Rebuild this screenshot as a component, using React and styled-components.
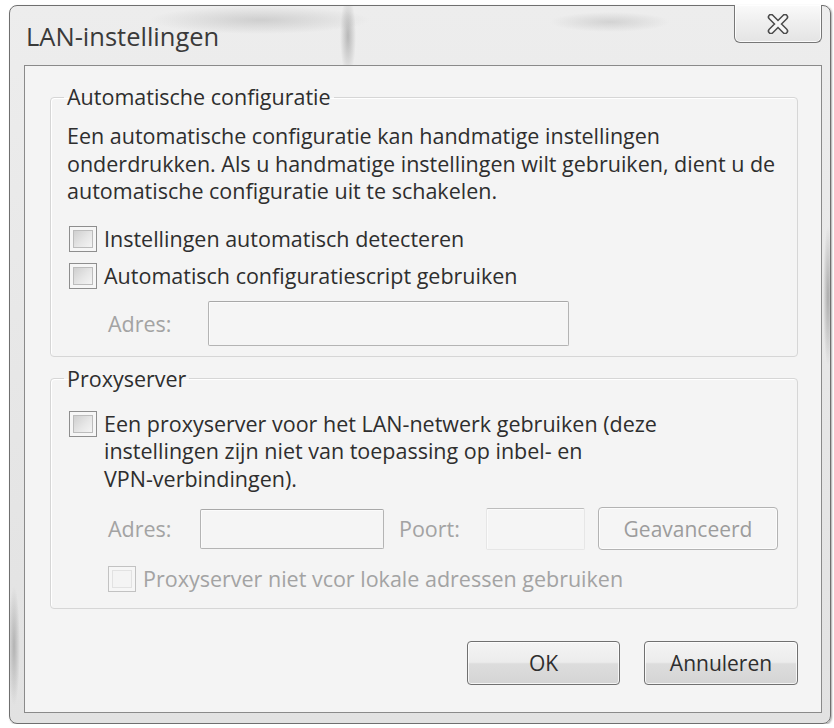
import React from 'react';
import styled, { createGlobalStyle } from 'styled-components';

const GlobalStyle = createGlobalStyle`
  html, body {
    margin: 0;
    background: #ffffff;
  }
  body {
    font-family: "Open Sans", "Noto Sans", sans-serif;
    color: #2e2e2e;
  }
`;

const Window = styled.div`
  box-sizing: border-box;
  width: 822px;
  margin: 5px 0 0 9px;
  padding: 0 8px 10px 14px;
  border: 1px solid #6f6f6f;
  border-radius: 8px;
  background:
    radial-gradient(ellipse 110px 14px at 250px 14px, rgba(150, 150, 150, 0.35), transparent),
    radial-gradient(ellipse 60px 10px at 600px 16px, rgba(150, 150, 150, 0.3), transparent),
    radial-gradient(ellipse 8px 40px at 338px 30px, rgba(120, 120, 120, 0.45), transparent),
    radial-gradient(ellipse 6px 60px at 4px 640px, rgba(120, 120, 120, 0.45), transparent),
    radial-gradient(ellipse 5px 70px at 818px 290px, rgba(110, 110, 110, 0.5), transparent),
    linear-gradient(180deg, #ededed 0%, #e6e6e6 60%, #e2e2e2 100%);
  box-shadow: 1px 1px 2px rgba(0, 0, 0, 0.35);
`;

const TitleBar = styled.div`
  display: flex;
  justify-content: space-between;
  align-items: flex-start;
  height: 59px;
`;

const Title = styled.div`
  padding: 15px 0 0 2px;
  font-size: 25.5px;
  line-height: 30px;
  color: #3a3a3a;
`;

const CloseButton = styled.div`
  box-sizing: border-box;
  width: 88px;
  height: 38px;
  margin-top: -1px;
  display: flex;
  align-items: center;
  justify-content: center;
  border: 1px solid #777;
  border-top: none;
  border-radius: 0 0 6px 6px;
  background: linear-gradient(180deg, #fafafa 0%, #eeeeee 50%, #e4e4e4 100%);
  box-shadow: inset 0 0 0 1px rgba(255, 255, 255, 0.8);
`;

const Client = styled.div`
  display: flex;
  flex-direction: column;
  padding: 20px 23px 27px 25px;
  border: 1px solid #8a8a8a;
  background: #f4f4f4;
`;

const Group = styled.fieldset`
  margin: ${(p) => (p.$first ? '0' : '11px 0 0')};
  min-width: 0;
  padding: ${(p) => p.$top}px 16px ${(p) => p.$bottom}px 16px;
  border: 1px solid #d6d6d6;
  border-radius: 4px;
  box-shadow: inset 1px 1px 0 #ffffff;
`;

const Legend = styled.legend`
  margin-left: -3px;
  padding: 0 3px;
  font-size: 21.5px;
  line-height: 22px;
  color: #2e2e2e;
`;

const Text = styled.div`
  font-size: 21.5px;
  line-height: 27.5px;
`;

const CheckRow = styled.div`
  display: flex;
  align-items: ${(p) => (p.$multi ? 'flex-start' : 'center')};
  gap: 7px;
  margin: ${(p) => p.$margin || '0'};
  padding-left: ${(p) => p.$indent || 2}px;
  min-height: 30px;
`;

const Box = styled.span`
  box-sizing: border-box;
  flex: none;
  width: 28px;
  height: 26px;
  margin-top: ${(p) => (p.$multi ? '1px' : '0')};
  border: 1px solid ${(p) => (p.$disabled ? '#c2c2c2' : '#8e8e8e')};
  padding: 3px;
  background: #f6f6f6;

  &::after {
    content: '';
    display: block;
    width: 100%;
    height: 100%;
    border: 1px solid ${(p) => (p.$disabled ? '#e2e2e2' : '#bcbcbc')};
    box-sizing: border-box;
    background: ${(p) =>
      p.$disabled
        ? '#f4f4f4'
        : 'linear-gradient(135deg, #cfcfcf 0%, #e6e6e6 55%, #f4f4f4 100%)'};
  }
`;

const Label = styled.span`
  font-size: 21.5px;
  line-height: 27.5px;
  color: ${(p) => (p.$disabled ? '#a3a3a3' : '#2e2e2e')};
`;

const FieldRow = styled.div`
  display: flex;
  align-items: center;
  margin: ${(p) => p.$margin || '0'};
  padding-left: 41px;
`;

const FieldLabel = styled.span`
  width: ${(p) => p.$width}px;
  flex: none;
  font-size: 21.5px;
  color: #a3a3a3;
`;

const Input = styled.div`
  box-sizing: border-box;
  flex: none;
  width: ${(p) => p.$width}px;
  height: ${(p) => p.$height}px;
  margin-right: ${(p) => p.$gap || 0}px;
  border: 1px solid ${(p) => (p.$faint ? '#e6e6e6' : '#b4b4b4')};
  border-top-color: ${(p) => (p.$faint ? '#bdbdbd' : '#a8a8a8')};
  border-radius: 2px;
  background: #f5f5f5;
  box-shadow: inset 1px 1px 0 #fbfbfb;
`;

const Button = styled.div`
  box-sizing: border-box;
  display: flex;
  align-items: center;
  justify-content: center;
  width: ${(p) => p.$width}px;
  height: ${(p) => p.$height}px;
  border: 1px solid ${(p) => (p.$disabled ? '#b3b3b3' : '#707070')};
  border-radius: 4px;
  font-size: 21px;
  color: ${(p) => (p.$disabled ? '#9c9c9c' : '#2e2e2e')};
  background: ${(p) =>
    p.$disabled
      ? '#f5f5f5'
      : 'linear-gradient(180deg, #f4f4f4 0%, #ececec 48%, #dddddd 52%, #d4d4d4 100%)'};
  box-shadow: inset 0 0 0 1px ${(p) => (p.$disabled ? '#fcfcfc' : 'rgba(255, 255, 255, 0.75)')};
`;

const ButtonRow = styled.div`
  display: flex;
  justify-content: flex-end;
  gap: 24px;
  margin-top: 32px;
`;

const CloseIcon = () => (
  <svg width="22" height="20" viewBox="0 0 22 20">
    <g strokeLinecap="round">
      <path d="M4 3 L18 17 M18 3 L4 17" stroke="#4a4a4a" strokeWidth="6.5" />
      <path d="M4 3 L18 17 M18 3 L4 17" stroke="#f6f6f6" strokeWidth="3.5" />
    </g>
  </svg>
);

export default function App() {
  return (
    <>
      <GlobalStyle />
      <Window>
        <TitleBar>
          <Title>LAN-instellingen</Title>
          <CloseButton>
            <CloseIcon />
          </CloseButton>
        </TitleBar>
        <Client>
          <Group $first $top={14} $bottom={10}>
            <Legend>Automatische configuratie</Legend>
            <Text>
              Een automatische configuratie kan handmatige instellingen
              <br />
              onderdrukken. Als u handmatige instellingen wilt gebruiken, dient u de
              <br />
              automatische configuratie uit te schakelen.
            </Text>
            <CheckRow $margin="19px 0 0">
              <Box />
              <Label>Instellingen automatisch detecteren</Label>
            </CheckRow>
            <CheckRow $margin="7px 0 0">
              <Box />
              <Label>Automatisch configuratiescript gebruiken</Label>
            </CheckRow>
            <FieldRow $margin="10px 0 0">
              <FieldLabel $width={100}>Adres:</FieldLabel>
              <Input $width={361} $height={45} />
            </FieldRow>
          </Group>

          <Group $top={20} $bottom={14}>
            <Legend>Proxyserver</Legend>
            <CheckRow $multi>
              <Box $multi />
              <Label>
                Een proxyserver voor het LAN-netwerk gebruiken (deze
                <br />
                instellingen zijn niet van toepassing op inbel- en
                <br />
                VPN-verbindingen).
              </Label>
            </CheckRow>
            <FieldRow $margin="15px 0 0">
              <FieldLabel $width={92}>Adres:</FieldLabel>
              <Input $width={184} $height={40} $gap={15} />
              <FieldLabel $width={87}>Poort:</FieldLabel>
              <Input $width={99} $height={42} $gap={13} $faint />
              <Button $disabled $width={180} $height={43}>
                Geavanceerd
              </Button>
            </FieldRow>
            <CheckRow $margin="14px 0 0" $indent={41}>
              <Box $disabled />
              <Label $disabled>Proxyserver niet vcor lokale adressen gebruiken</Label>
            </CheckRow>
          </Group>

          <ButtonRow>
            <Button $width={153} $height={44}>
              OK
            </Button>
            <Button $width={154} $height={44}>
              Annuleren
            </Button>
          </ButtonRow>
        </Client>
      </Window>
    </>
  );
}
